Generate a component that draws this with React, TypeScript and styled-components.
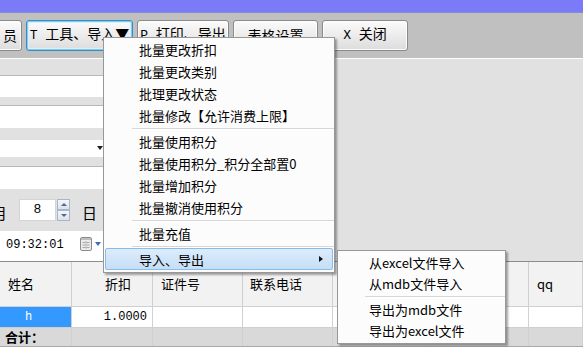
import React from "react";
import styled, { createGlobalStyle } from "styled-components";

const GlobalStyle = createGlobalStyle`
  html, body {
    margin: 0;
    padding: 0;
  }
  body {
    width: 583px;
    height: 347px;
    overflow: hidden;
    font-family: "Noto Sans CJK SC", "Noto Sans", sans-serif;
    color: #000;
  }
`;

const MAIN_ITEMS: (string | null)[] = [
  "批量更改折扣",
  "批量更改类别",
  "批理更改状态",
  "批量修改【允许消费上限】",
  null,
  "批量使用积分",
  "批量使用积分_积分全部置0",
  "批量增加积分",
  "批量撤消使用积分",
  null,
  "批量充值",
  null,
];

const SUB_ITEMS: (string | null)[] = [
  "从excel文件导入",
  "从mdb文件导入",
  null,
  "导出为mdb文件",
  "导出为excel文件",
];

const COLUMNS = [
  { title: "姓名", width: 72, pl: 8 },
  { title: "折扣", width: 81, pl: 33 },
  { title: "证件号", width: 90, pl: 8 },
  { title: "联系电话", width: 90, pl: 7 },
  { title: "", width: 98, pl: 8 },
  { title: "", width: 98, pl: 8 },
  { title: "qq", width: 54, pl: 8 },
];

const CalendarIcon = () => (
  <svg width="12" height="14" viewBox="0 0 12 14">
    <rect x="0.5" y="0.5" width="11" height="13" rx="1.5" fill="#ececec" stroke="#8c8c8c" />
    <rect x="1" y="1" width="10" height="2" fill="#bdbdbd" />
    <line x1="2.5" y1="5.5" x2="9.5" y2="5.5" stroke="#a8a8a8" />
    <line x1="2.5" y1="8" x2="9.5" y2="8" stroke="#a8a8a8" />
    <line x1="2.5" y1="10.5" x2="9.5" y2="10.5" stroke="#a8a8a8" />
    <line x1="6" y1="4" x2="6" y2="12" stroke="#c4c4c4" />
  </svg>
);

export default function App() {
  return (
    <Root>
      <GlobalStyle />
      <TitleStrip />
      <Toolbar>
        <ToolButton $w={80} $clipped>
          <ButtonLabel>员</ButtonLabel>
        </ToolButton>
        <ToolButton $w={107} $focused>
          <ButtonLabel>
            <Latin>T </Latin>工具、导入▼
          </ButtonLabel>
        </ToolButton>
        <ToolButton $w={92}>
          <ButtonLabel>
            <Latin>P </Latin>打印、导出
          </ButtonLabel>
        </ToolButton>
        <ToolButton $w={85}>
          <ButtonLabel>表格设置</ButtonLabel>
        </ToolButton>
        <ToolButton $w={86}>
          <ButtonLabel>
            <Latin>X </Latin>关闭
          </ButtonLabel>
        </ToolButton>
      </Toolbar>
      <Body>
        <FormPanel>
          <Field $h={22} $mt={16} />
          <Field $h={23} $mt={8} />
          <Combo $mt={12}>
            <ComboArrow />
          </Combo>
          <Field $h={23} $mt={9} />
          <SpinRow>
            <DateLabel $ml={-8}>月</DateLabel>
            <SpinBox>8</SpinBox>
            <SpinButtons>
              <SpinButton>
                <SpinArrow $up />
              </SpinButton>
              <SpinButton>
                <SpinArrow />
              </SpinButton>
            </SpinButtons>
            <DateLabel $ml={12}>日</DateLabel>
          </SpinRow>
          <TimeRow>
            <TimeText>09:32:01</TimeText>
            <CalendarIcon />
            <PickerArrow />
          </TimeRow>
        </FormPanel>
      </Body>
      <Table>
        <HeaderRow>
          {COLUMNS.map((c, i) => (
            <Cell key={i} $w={c.width} $pl={c.pl}>
              {c.title}
            </Cell>
          ))}
        </HeaderRow>
        <DataRow>
          <Cell $w={72} $pl={25} $selected $mono>
            h
          </Cell>
          <Cell $w={81} $pr={5} $right $mono>
            1.0000
          </Cell>
          {COLUMNS.slice(2).map((c, i) => (
            <Cell key={i} $w={c.width} />
          ))}
        </DataRow>
        <TotalRow>
          <Cell $w={72} $pl={5} $bold>
            合计：
          </Cell>
          {COLUMNS.slice(1).map((c, i) => (
            <Cell key={i} $w={c.width} />
          ))}
        </TotalRow>
      </Table>

      <Menu>
        {MAIN_ITEMS.map((label, i) =>
          label === null ? (
            <Separator key={i} />
          ) : (
            <MenuItem key={i}>{label}</MenuItem>
          )
        )}
        <MenuItem $active>
          导入、导出
          <SubArrow />
        </MenuItem>
      </Menu>

      <SubMenu>
        {SUB_ITEMS.map((label, i) =>
          label === null ? (
            <Separator key={i} $inset={27} $h={5} />
          ) : (
            <MenuItem key={i} $h={21} $pl={29}>
              {label}
            </MenuItem>
          )
        )}
      </SubMenu>
    </Root>
  );
}

const Root = styled.div`
  position: relative;
  width: 583px;
  height: 347px;
  overflow: hidden;
  display: flex;
  flex-direction: column;
  background: #c8c8c8;
`;

const TitleStrip = styled.div`
  flex: none;
  height: 12px;
  background: #7b7bfa;
  border-bottom: 1px solid #8a8ad8;
`;

const Toolbar = styled.div`
  flex: none;
  height: 46px;
  box-sizing: border-box;
  display: flex;
  align-items: flex-start;
  gap: 4px;
  padding-top: 7px;
  background: #c0c0c0;
  border-bottom: 1px solid #ffffff;
`;

const ToolButton = styled.div<{ $w: number; $focused?: boolean; $clipped?: boolean }>`
  flex: none;
  width: ${(p) => p.$w}px;
  height: 31px;
  box-sizing: border-box;
  margin-left: ${(p) => (p.$clipped ? "-58px" : "0")};
  display: flex;
  align-items: center;
  justify-content: ${(p) => (p.$clipped ? "flex-end" : "center")};
  padding-right: ${(p) => (p.$clipped ? "4px" : "0")};
  padding-bottom: 2px;
  border-radius: 3px;
  border: 1px solid ${(p) => (p.$focused ? "#3c8dbc" : "#8a8a8a")};
  background: linear-gradient(#fbfbfb, #ececec 50%, #dcdcdc);
  box-shadow: ${(p) =>
    p.$focused
      ? "inset 0 0 0 1px #7fcdf3, inset 0 0 0 2px #d8f0fc"
      : "inset 0 0 0 1px #fdfdfd"};
`;

const ButtonLabel = styled.span`
  font-size: 14px;
  line-height: 18px;
  white-space: pre;
`;

const Latin = styled.span`
  font-family: "Liberation Mono", monospace;
  font-size: 13px;
`;

const Body = styled.div`
  flex: none;
  height: 202px;
  display: flex;
  background: #e1e1e1;
`;

const FormPanel = styled.div`
  width: 104px;
  display: flex;
  flex-direction: column;
`;

const Field = styled.div<{ $h: number; $mt: number }>`
  height: ${(p) => p.$h}px;
  margin-top: ${(p) => p.$mt}px;
  box-sizing: border-box;
  background: #ffffff;
  border-top: 1px solid #b8b8b8;
`;

const Combo = styled.div<{ $mt: number }>`
  height: 17px;
  margin-top: ${(p) => p.$mt}px;
  box-sizing: border-box;
  background: #ffffff;
  display: flex;
  justify-content: flex-end;
  align-items: flex-start;
  padding: 6px 1px 0 0;
`;

const ComboArrow = styled.div`
  width: 0;
  height: 0;
  border-left: 3px solid transparent;
  border-right: 3px solid transparent;
  border-top: 4px solid #202020;
`;

const SpinRow = styled.div`
  height: 42px;
  display: flex;
  align-items: center;
`;

const DateLabel = styled.div<{ $ml: number }>`
  margin-left: ${(p) => p.$ml}px;
  font-size: 15px;
  line-height: 18px;
  padding-top: 5px;
  flex: none;
`;

const SpinBox = styled.div`
  margin-left: 12px;
  width: 37px;
  height: 22px;
  box-sizing: border-box;
  background: #ffffff;
  border: 1px solid #d4d4d4;
  font-family: "Liberation Mono", monospace;
  font-size: 13px;
  line-height: 16px;
  text-align: center;
  padding-top: 2px;
`;

const SpinButtons = styled.div`
  margin-left: 1px;
  width: 13px;
  height: 22px;
  display: flex;
  flex-direction: column;
`;

const SpinButton = styled.div`
  flex: 1;
  box-sizing: border-box;
  border: 1px solid #a9b6c9;
  background: linear-gradient(#f4f7fb, #d9e2ee);
  display: flex;
  align-items: center;
  justify-content: center;
`;

const SpinArrow = styled.div<{ $up?: boolean }>`
  width: 0;
  height: 0;
  border-left: 3px solid transparent;
  border-right: 3px solid transparent;
  ${(p) =>
    p.$up ? "border-bottom: 3px solid #52688c;" : "border-top: 3px solid #52688c;"}
`;

const TimeRow = styled.div`
  height: 30px;
  background: #ffffff;
  display: flex;
  align-items: flex-start;
  padding: 6px 0 0 6px;
  box-sizing: border-box;
`;

const TimeText = styled.div`
  width: 74px;
  font-family: "Liberation Mono", monospace;
  font-size: 12px;
  line-height: 14px;
  padding-top: 1px;
`;

const PickerArrow = styled.div`
  margin: 5px 0 0 3px;
  width: 0;
  height: 0;
  border-left: 3.5px solid transparent;
  border-right: 3.5px solid transparent;
  border-top: 4px solid #3d6eb4;
`;

const Table = styled.div`
  flex: 1;
  display: flex;
  flex-direction: column;
  border-top: 1px solid #8c8c8c;
  background: #d4d4d4;
`;

const HeaderRow = styled.div`
  flex: none;
  height: 44px;
  display: flex;
  background: #f2f2f2;
  border-bottom: 1px solid #d0d0d0;
  font-size: 13px;
`;

const DataRow = styled.div`
  flex: none;
  height: 20px;
  display: flex;
  background: #ffffff;
  border-bottom: 1px solid #cfcfcf;
`;

const TotalRow = styled.div`
  flex: none;
  height: 18px;
  display: flex;
  background: #d9d9d9;
  border-bottom: 1px solid #a8a8a8;
`;

const Cell = styled.div<{
  $w: number;
  $pl?: number;
  $pr?: number;
  $right?: boolean;
  $selected?: boolean;
  $mono?: boolean;
  $bold?: boolean;
}>`
  flex: none;
  width: ${(p) => p.$w}px;
  box-sizing: border-box;
  display: flex;
  align-items: center;
  justify-content: ${(p) => (p.$right ? "flex-end" : "flex-start")};
  padding-left: ${(p) => p.$pl ?? 0}px;
  padding-right: ${(p) => p.$pr ?? 0}px;
  border-right: 1px solid #d0d0d0;
  background: ${(p) => (p.$selected ? "#3399ff" : "transparent")};
  color: ${(p) => (p.$selected ? "#ffffff" : "#000000")};
  font-family: ${(p) =>
    p.$mono ? '"Liberation Mono", monospace' : '"Noto Sans CJK SC", sans-serif'};
  font-size: ${(p) => (p.$mono ? "12px" : "13px")};
  line-height: 16px;
  font-weight: ${(p) => (p.$bold ? 700 : 400)};
  white-space: nowrap;
`;

const Menu = styled.div`
  position: absolute;
  left: 103px;
  top: 37px;
  width: 232px;
  box-sizing: border-box;
  padding: 0 0 2px;
  display: flex;
  flex-direction: column;
  background: #fcfcfc;
  border: 1px solid #979797;
  box-shadow: 2px 2px 2px rgba(0, 0, 0, 0.35);
`;

const SubMenu = styled(Menu)`
  left: 337px;
  top: 250px;
  width: 169px;
  padding: 1px 0 2px;
`;

const MenuItem = styled.div<{ $active?: boolean; $h?: number; $pl?: number }>`
  position: relative;
  height: ${(p) => p.$h ?? 22}px;
  box-sizing: border-box;
  display: flex;
  align-items: center;
  padding-left: ${(p) => p.$pl ?? 33}px;
  margin: 0 1px;
  font-size: 13px;
  white-space: nowrap;
  border-radius: 2px;
  border: 1px solid ${(p) => (p.$active ? "#88bce9" : "transparent")};
  background: ${(p) => (p.$active ? "linear-gradient(#dcecfc, #c6def6)" : "transparent")};
`;

const SubArrow = styled.div`
  position: absolute;
  right: 9px;
  top: 7px;
  width: 0;
  height: 0;
  border-top: 3.5px solid transparent;
  border-bottom: 3.5px solid transparent;
  border-left: 4px solid #111;
`;

const Separator = styled.div<{ $inset?: number; $h?: number }>`
  height: ${(p) => p.$h ?? 4}px;
  display: flex;
  align-items: center;
  padding-left: ${(p) => p.$inset ?? 28}px;
  &::after {
    content: "";
    flex: 1;
    height: 1px;
    background: #d7d7d7;
    box-shadow: 0 1px 0 #ffffff;
  }
`;
